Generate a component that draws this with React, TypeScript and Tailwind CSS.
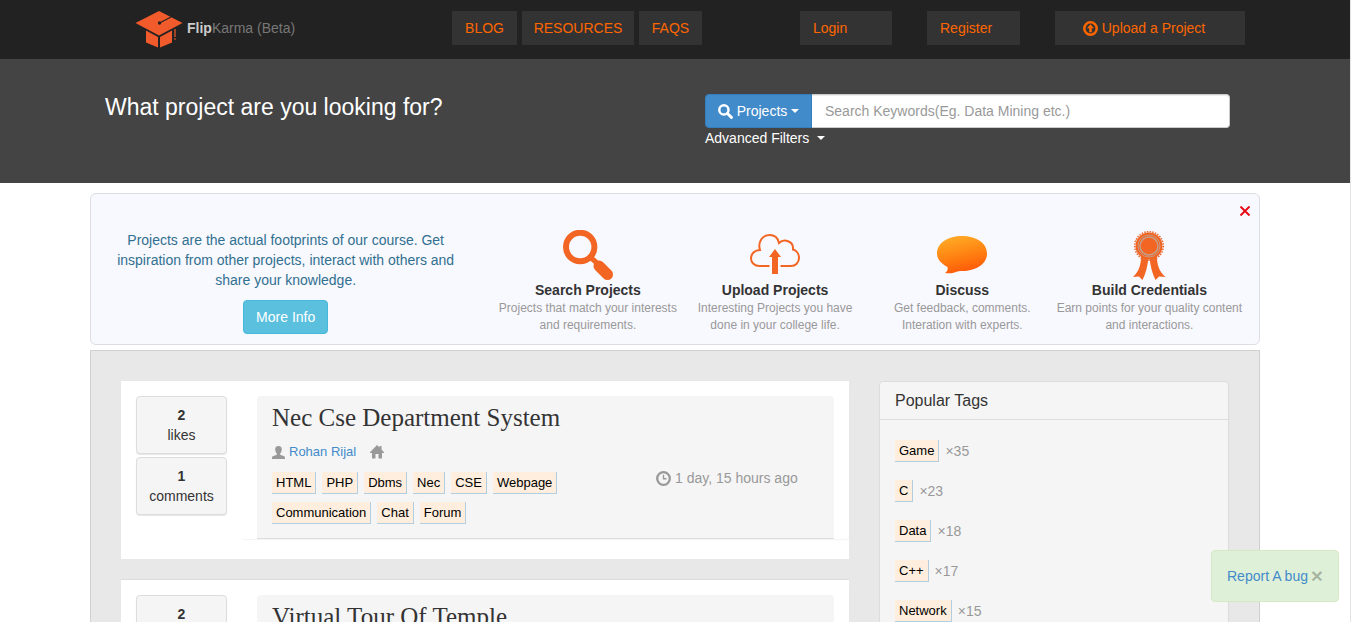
import React from "react";

const navLinks = [
  { label: "BLOG", width: "w-[65px]" },
  { label: "RESOURCES", width: "w-[112px]" },
  { label: "FAQS", width: "w-[63px]" },
];

const popularTags = [
  { name: "Game", count: 35 },
  { name: "C", count: 23 },
  { name: "Data", count: 18 },
  { name: "C++", count: 17 },
  { name: "Network", count: 15 },
];

function Logo() {
  return (
    <svg className="h-[37px] w-12" viewBox="0 0 48 37" aria-hidden="true">
      <path d="M0.5 12 24 0 47.5 12 24 24.500Z" fill="#f15a2b" />
      <path d="M24.500 12 36 6" stroke="#222" strokeWidth="1.300" />
      <circle cx="24.500" cy="12" r="1.700" fill="#222" />
      <path d="M11 19.500 23 26V36.500L11 31.500ZM37 19.500 25 26V36.500L37 31.500Z" fill="#f15a2b" />
      <path d="M40 18V26M39 28H41" stroke="#f15a2b" strokeWidth="1.200" fill="none" />
    </svg>
  );
}

function Caret() {
  return <span className="inline-block border-x-4 border-t-4 border-x-transparent border-t-current align-middle" />;
}

function SearchGlyph() {
  return (
    <svg className="size-[15px]" viewBox="0 0 14 14" fill="none" stroke="currentColor" aria-hidden="true">
      <circle cx="5.500" cy="5.500" r="4.300" strokeWidth="2.300" />
      <path d="M8.800 8.800 12.500 12.500" strokeWidth="2.700" strokeLinecap="round" />
    </svg>
  );
}

function UploadGlyph() {
  return (
    <svg className="size-[15px]" viewBox="0 0 15 15" aria-hidden="true">
      <circle cx="7.500" cy="7.500" r="6.200" fill="none" stroke="currentColor" strokeWidth="2.500" />
      <path d="M7.500 3.200 11 7.200H8.800V11.300H6.200V7.200H4Z" fill="currentColor" />
    </svg>
  );
}

function UserGlyph() {
  return (
    <svg className="h-[13px] w-[13px]" viewBox="0 0 13 13" fill="#999" aria-hidden="true">
      <path d="M6.500 0C8.900 0 10 1.500 9.800 3.700 9.600 5.500 9 6.700 8.200 7.500V8.800L12.200 10.300C12.800 10.600 13 11.200 13 13H0C0 11.200.2 10.600.8 10.300L4.800 8.800V7.500C4 6.700 3.400 5.500 3.200 3.700 3 1.500 4.100 0 6.500 0Z" />
    </svg>
  );
}

function HomeGlyph() {
  return (
    <svg className="h-[14px] w-[14px]" viewBox="0 0 14 14" fill="#999" aria-hidden="true">
      <path d="M7 0 9.500 2.500V1H11.500V4.500L14 7.200V8H12V13.500H8.500V9H5.500V13.500H2V8H0V7.200Z" />
    </svg>
  );
}

function ClockGlyph() {
  return (
    <svg className="size-[15px]" viewBox="0 0 15 15" fill="none" stroke="currentColor" aria-hidden="true">
      <circle cx="7.500" cy="7.500" r="6.300" strokeWidth="2.300" />
      <path d="M7.500 3.800V7.800H10.500" strokeWidth="1.400" />
    </svg>
  );
}

function MagnifierArt() {
  return (
    <svg className="size-[50px]" viewBox="0 0 50 50" aria-hidden="true">
      <circle cx="17.200" cy="17" r="14.200" fill="none" stroke="#f26522" strokeWidth="6" />
      <path d="M27 27 34 33" stroke="#f26522" strokeWidth="5" />
      <path d="M36 36 44.500 44.500" stroke="#f26522" strokeWidth="11" strokeLinecap="round" />
    </svg>
  );
}

function CloudArt() {
  return (
    <svg className="size-[50px]" viewBox="0 0 50 50" aria-hidden="true">
      <path
        d="M19.500 36H9.500C4.500 36 1 32.500 1 28.500 1 24 4.500 20 10 20 7.500 12 12.500 5 19.500 5 24.500 5 28 8 29 13 33.500 8.500 44 10.500 43 19.500 46.500 20.500 49 24 49 28 49 32.500 45.500 36 41 36H30.500"
        fill="none"
        stroke="#f26522"
        strokeWidth="2"
      />
      <path d="M25 19 31 27H28V44H22V27H19Z" fill="#f26522" />
    </svg>
  );
}

function BubbleArt() {
  return (
    <svg className="size-[50px]" viewBox="0 0 50 50" aria-hidden="true">
      <defs>
        <linearGradient id="bubble" x1="0.3" y1="0" x2="0.6" y2="1">
          <stop offset="0" stopColor="#ffab26" />
          <stop offset="0.5" stopColor="#ff8412" />
          <stop offset="1" stopColor="#fd5606" />
        </linearGradient>
      </defs>
      <path
        d="M25 6C39 6 50 13 50 23.500 50 34 39 41 25 41 22.500 41 21 41 19 42 15.500 43.500 11.500 43.500 8 43 10.500 41.500 11 39.500 10.500 37C4 33.500 0 29 0 23.500 0 13 11 6 25 6Z"
        fill="url(#bubble)"
      />
    </svg>
  );
}

function RibbonArt() {
  return (
    <svg className="size-[50px]" viewBox="0 0 50 50" aria-hidden="true">
      <path d="M17 24 24.500 28C23.500 36 22 43 18.500 50L15 46.500 9 47C14.500 42 17.500 35 17 24ZM33 24 25.500 28C26.500 36 28 43 31.500 50L35 46.500 41.500 47C35.500 42 32.500 35 33 24Z" fill="#f26522" />
      <circle cx="25" cy="16" r="13.500" fill="#f26522" />
      <circle cx="25" cy="16" r="14.300" fill="none" stroke="#e8703a" strokeWidth="1.600" strokeDasharray="1.500 1.200" />
      <circle cx="25" cy="16" r="11" fill="none" stroke="#c79a80" strokeWidth="1" />
      <circle cx="25" cy="16" r="9" fill="none" stroke="#c2a18e" strokeWidth="1.400" />
    </svg>
  );
}

const features = [
  { title: "Search Projects", lines: ["Projects that match your interests", "and requirements."], art: <MagnifierArt /> },
  { title: "Upload Projects", lines: ["Interesting Projects you have", "done in your college life."], art: <CloudArt /> },
  { title: "Discuss", lines: ["Get feedback, comments.", "Interation with experts."], art: <BubbleArt /> },
  { title: "Build Credentials", lines: ["Earn points for your quality content", "and interactions."], art: <RibbonArt /> },
];

function Tag({ name }: { name: string }) {
  return (
    <a href="#" className="inline-block border-r border-b border-[#b3cee1] bg-[#ffeedd] px-1 text-[13px] leading-[21px] text-black">
      {name}
    </a>
  );
}

function Stat({ value, label }: { value: number; label: string }) {
  return (
    <div className="rounded border border-[#ddd] bg-[#f5f5f5] py-2 text-center leading-5 shadow-[0_1px_1px_rgba(0,0,0,0.1)]">
      <b className="block">{value}</b>
      {label}
    </div>
  );
}

function ProjectCard({ title, likes, className, children }: { title: string; likes: React.ReactNode; className?: string; children?: React.ReactNode }) {
  return (
    <article className={"flex bg-white pt-[15px] pb-5 pl-[15px] " + (className ?? "")}>
      <div className="flex w-[91px] shrink-0 flex-col gap-[3px]">{likes}</div>
      <div className="ml-[15px] flex-1 rounded-b px-[15px] shadow-[0_1px_1px_rgba(0,0,0,0.05)]">
        <div className="h-full min-h-[143px] rounded-t border-b border-[#ddd] bg-[#f5f5f5] px-[15px] pt-2">
          <h2 className="font-[Georgia,'Liberation_Serif',serif] text-[25px] leading-[28px]">{title}</h2>
          {children}
        </div>
      </div>
    </article>
  );
}

export default function App() {
  return (
    <div className="relative h-screen overflow-hidden border-r border-[#e3e3e3] bg-white font-['Liberation_Sans',Arial,sans-serif] text-[14px] leading-5 text-[#333]">
      <header className="border-b border-[#222] bg-[#222]">
        <div className="mx-auto flex h-[58px] max-w-[1170px] items-start pt-[11px] pr-[15px] pl-[45px]">
          <a href="#" className="flex w-[317px] shrink-0 text-[#777]">
            <Logo />
            <span className="ml-1 leading-[34px]">
              <b className="text-[#ccc]">Flip</b>Karma (Beta)
            </span>
          </a>
          <nav className="flex gap-[5px] text-center leading-[34px] text-[#ff6600]">
            {navLinks.map((link) => (
              <a key={link.label} href="#" className={"bg-[#333] " + link.width}>
                {link.label}
              </a>
            ))}
          </nav>
          <div className="ml-auto flex gap-[35px] leading-[34px] text-[#ff6600]">
            <a href="#" className="w-[92px] bg-[#333] px-[13px]">Login</a>
            <a href="#" className="w-[93px] bg-[#333] px-[13px]">Register</a>
            <a href="#" className="flex w-[190px] items-center justify-center gap-1 bg-[#333] pr-3">
              <UploadGlyph />
              Upload a Project
            </a>
          </div>
        </div>
      </header>

      <section className="bg-[#444] text-white">
        <div className="mx-auto flex h-[124px] max-w-[1170px] justify-between px-[15px] pt-[35px]">
          <h1 className="text-[23px] leading-[26px]">What project are you looking for?</h1>
          <div className="mr-[15px] w-[525px]">
            <div className="flex h-[34px]">
              <button type="button" className="flex w-[107px] items-center justify-center gap-1 rounded-l border border-[#357ebd] bg-[#428bca]">
                <SearchGlyph />
                Projects
                <Caret />
              </button>
              <input
                type="text"
                aria-label="Search keywords"
                placeholder="Search Keywords(Eg. Data Mining etc.)"
                className="flex-1 rounded-r border border-l-0 border-[#ccc] bg-white px-[13px] text-[#555] shadow-[inset_0_1px_1px_rgba(0,0,0,0.075)] outline-none placeholder:text-[#999]"
              />
            </div>
            <button type="button" className="flex items-center gap-2">
              Advanced Filters
              <Caret />
            </button>
          </div>
        </div>
      </section>

      <main className="mx-auto max-w-[1170px]">
        <section className="relative mt-[10px] grid grid-cols-3 rounded-md border border-[#dddde3] bg-[#f8f8ff] pt-9 pb-[10px]">
          <div className="px-[15px] text-center text-[#31708f]">
            <p>
              Projects are the actual footprints of our course. Get inspiration from other projects, interact with others and share your knowledge.
            </p>
            <button type="button" className="mt-[10px] h-[34px] rounded border border-[#46b8da] bg-[#5bc0de] px-3 text-white">
              More Info
            </button>
          </div>
          <div className="col-span-2 grid grid-cols-4 pr-4 pl-[14px] text-center">
            {features.map((feature) => (
              <div key={feature.title} className="flex flex-col items-center">
                {feature.art}
                <b>{feature.title}</b>
                <p className="text-[12px] leading-[17px] whitespace-nowrap text-[#999]">
                  {feature.lines[0]}
                  <br />
                  {feature.lines[1]}
                </p>
              </div>
            ))}
          </div>
          <button type="button" aria-label="Close" className="absolute top-3 right-[9px] p-0">
            <svg className="size-[10px]" viewBox="0 0 10 10" stroke="#e90c17" strokeWidth="2" aria-hidden="true">
              <path d="M0.500 0.500 9.500 9.500M9.500 0.500 0.500 9.500" />
            </svg>
          </button>
        </section>

        <section className="mt-[5px] flex gap-[30px] border border-[#d0d0d0] bg-[#e8e8e8] p-[30px]">
          <div className="min-w-0 flex-1">
            <ProjectCard
              title="Nec Cse Department System"
              likes={
                <>
                  <Stat value={2} label="likes" />
                  <Stat value={1} label="comments" />
                </>
              }
            >
              <div className="flex h-[106px] items-start">
                <div className="w-[384px] pt-[10px]">
                  <div className="flex items-center gap-1">
                    <UserGlyph />
                    <a href="#" className="mr-[10px] text-[13px] text-[#428bca]">Rohan Rijal</a>
                    <HomeGlyph />
                  </div>
                  <div className="mt-[10px] flex w-[300px] flex-wrap gap-x-[6px] gap-y-2">
                    {["HTML", "PHP", "Dbms", "Nec", "CSE", "Webpage", "Communication", "Chat", "Forum"].map((tag) => (
                      <Tag key={tag} name={tag} />
                    ))}
                  </div>
                </div>
                <div className="mt-9 flex items-center gap-1 whitespace-nowrap text-[#999]">
                  <ClockGlyph />
                  1 day, 15 hours ago
                </div>
              </div>
            </ProjectCard>
            <ProjectCard title="Virtual Tour Of Temple" likes={<Stat value={2} label="likes" />} className="mt-5 border-t border-[#ddd]" />
          </div>

          <aside className="w-[350px] shrink-0 rounded border border-[#ddd] bg-[#f5f5f5] shadow-[0_1px_1px_rgba(0,0,0,0.05)]">
            <h3 className="border-b border-[#ddd] px-[15px] py-[9px] text-[16px] leading-[19px]">Popular Tags</h3>
            <ul className="flex flex-col gap-[18px] px-[15px] pt-5">
              {popularTags.map((tag) => (
                <li key={tag.name} className="flex items-center gap-[6px] text-[#999]">
                  <Tag name={tag.name} />
                  ×{tag.count}
                </li>
              ))}
            </ul>
          </aside>
        </section>
      </main>

      <div className="fixed right-3 bottom-5 flex h-[52px] w-32 items-center justify-between rounded border border-[#d6e9c6] bg-[#dff0d8] px-[15px]">
        <a href="#" className="whitespace-nowrap text-[#428bca]">Report A bug</a>
        <button type="button" aria-label="Dismiss" className="text-[21px] leading-5 font-bold text-black/25">
          ×
        </button>
      </div>
    </div>
  );
}
